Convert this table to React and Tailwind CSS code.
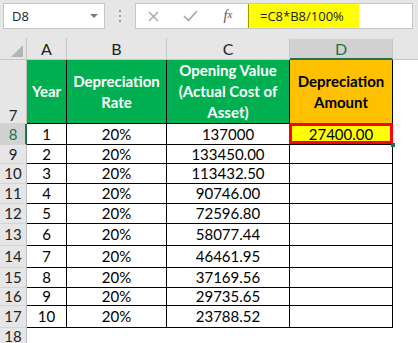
import React from 'react';

const rows = [
  { n: 8, year: 1, value: '137000', h: 'h-[21px]' },
  { n: 9, year: 2, value: '133450.00', h: 'h-[19px]' },
  { n: 10, year: 3, value: '113432.50', h: 'h-[20px]' },
  { n: 11, year: 4, value: '90746.00', h: 'h-[20px]' },
  { n: 12, year: 5, value: '72596.80', h: 'h-[20px]' },
  { n: 13, year: 6, value: '58077.44', h: 'h-[22px]' },
  { n: 14, year: 7, value: '46461.95', h: 'h-[22px]' },
  { n: 15, year: 8, value: '37169.56', h: 'h-[20px]' },
  { n: 16, year: 9, value: '29735.65', h: 'h-[18px]' },
  { n: 17, year: 10, value: '23788.52', h: 'h-[22px]' },
];

function RowHeader({ n, active, tall }) {
  return (
    <div
      className={
        active
          ? 'flex w-[27px] shrink-0 items-center justify-center border-b border-r-2 border-b-[#d4d4d4] border-r-[#217346] bg-[#d2d2d2] pl-[1px] text-[#217346]'
          : tall
          ? 'flex w-[27px] shrink-0 items-end justify-center border-b border-r border-b-[#d4d4d4] border-r-[#bdbdbd] bg-[#e6e6e6] text-[#222]'
          : 'flex w-[27px] shrink-0 items-center justify-center border-b border-r border-b-[#d4d4d4] border-r-[#bdbdbd] bg-[#e6e6e6] text-[#222]'
      }
    >
      {n}
    </div>
  );
}

export default function App() {
  return (
    <div className="h-[343px] w-[418px] overflow-hidden bg-white font-[Lato,sans-serif] text-[15px] leading-none text-black">
      {/* Name box + formula bar */}
      <div className="flex h-[38px] items-start bg-[#e6e6e6] pl-[3px] pr-[5px] pt-[3px]">
        <div className="flex h-[26px] w-[102px] items-center justify-between border border-[#c6c6c6] bg-white pl-[8px] pr-[6px] font-['Open_Sans',sans-serif] text-[13px] text-[#222]">
          D8
          <svg width="8" height="4" viewBox="0 0 8 4">
            <path d="M0 0h8L4 4z" fill="#7a7a7a" />
          </svg>
        </div>
        <div className="flex h-[26px] w-[30px] flex-col items-center justify-center gap-[3px]">
          <span className="h-[2px] w-[2px] bg-[#9a9a9a]" />
          <span className="h-[2px] w-[2px] bg-[#9a9a9a]" />
          <span className="h-[2px] w-[2px] bg-[#9a9a9a]" />
        </div>
        <div className="flex h-[26px] flex-1 border border-[#c6c6c6] bg-white">
          <div className="flex w-[112px] items-center">
            <div className="flex w-[35px] justify-center">
              <svg width="11" height="11" viewBox="0 0 11 11">
                <path d="M1 1l9 9M10 1l-9 9" stroke="#a6a6a6" strokeWidth="1.3" />
              </svg>
            </div>
            <div className="flex w-[38px] justify-center">
              <svg width="15" height="12" viewBox="0 0 15 12">
                <path d="M1 6l4.5 4.5L14 1" stroke="#a6a6a6" strokeWidth="1.6" fill="none" />
              </svg>
            </div>
            <div className="flex w-[38px] justify-center font-['Liberation_Serif',serif] text-[14px] italic text-[#555]">
              f<span className="text-[11px]">x</span>
            </div>
          </div>
          <div className="flex w-[111px] items-center border-l border-l-[#9c9c00] bg-[#ffff00] pl-[11px] font-['Open_Sans',sans-serif] text-[13px] text-[#222]">
            =C8*B8/100%
          </div>
        </div>
      </div>

      {/* Column headers */}
      <div className="flex h-[22px] bg-[#e6e6e6] text-[16px] text-[#222]">
        <div className="flex w-[27px] shrink-0 items-end justify-end border-b border-r border-[#c6c6c6] pb-[2px] pr-[3px]">
          <svg width="12" height="12" viewBox="0 0 12 12">
            <path d="M12 0v12H0z" fill="#b4b4b4" />
          </svg>
        </div>
        <div className="flex w-[40px] shrink-0 items-center justify-center border-b border-r border-[#c6c6c6]">A</div>
        <div className="flex w-[100px] shrink-0 items-center justify-center border-b border-r border-[#c6c6c6]">B</div>
        <div className="flex w-[123px] shrink-0 items-center justify-center border-b border-r border-[#c6c6c6]">C</div>
        <div className="mt-[1px] flex w-[103px] shrink-0 items-center justify-center border-b-2 border-r border-b-[#217346] border-r-[#c6c6c6] bg-[#d2d2d2] text-[#217346]">D</div>
        <div className="flex-1 border-b border-[#c6c6c6]" />
      </div>

      {/* Row 7: header */}
      <div className="flex h-[64px]">
        <RowHeader n={7} tall />
        <div className="flex w-[40px] shrink-0 items-center justify-center border-b border-r border-black bg-[#00b050] font-bold text-white">
          Year
        </div>
        <div className="flex w-[100px] shrink-0 items-center justify-center border-b border-r border-black bg-[#00b050] text-center font-bold leading-[21px] text-white">
          Depreciation
          <br />
          Rate
        </div>
        <div className="flex w-[123px] shrink-0 items-center justify-center border-b border-r border-black bg-[#00b050] text-center font-bold leading-[21px] text-white">
          Opening Value
          <br />
          (Actual Cost of
          <br />
          Asset)
        </div>
        <div className="flex w-[103px] shrink-0 items-center justify-center border-b border-r border-black bg-[#ffc000] text-center font-bold leading-[21px]">
          Depreciation
          <br />
          Amount
        </div>
      </div>

      {/* Data rows */}
      {rows.map((r) => (
        <div key={r.n} className={`flex ${r.h}`}>
          <RowHeader n={r.n} active={r.n === 8} />
          <div className="flex w-[40px] shrink-0 items-center justify-center border-b border-r border-black">{r.year}</div>
          <div className="flex w-[100px] shrink-0 items-center justify-center border-b border-r border-black">20%</div>
          <div className="flex w-[123px] shrink-0 items-center justify-center border-b border-r border-black">{r.value}</div>
          {r.n === 8 ? (
            <div className="relative flex w-[103px] shrink-0 items-center justify-center border-b border-r border-black bg-[#ffff00]">
              27400.00
              <div className="absolute -left-[1px] -right-[1px] -top-[1px] bottom-0 border-[3px] border-[#ff0000]" />
              <div className="absolute -bottom-[3px] -right-[3px] h-[4px] w-[4px] bg-[#217346]" />
            </div>
          ) : (
            <div className="w-[103px] shrink-0 border-b border-r border-black" />
          )}
        </div>
      ))}

      {/* Row 18 */}
      <div className="flex h-[15px]">
        <div className="flex w-[27px] shrink-0 items-start justify-center border-r border-r-[#bdbdbd] bg-[#e6e6e6] pt-[1px] text-[#222]">
          18
        </div>
      </div>
    </div>
  );
}
